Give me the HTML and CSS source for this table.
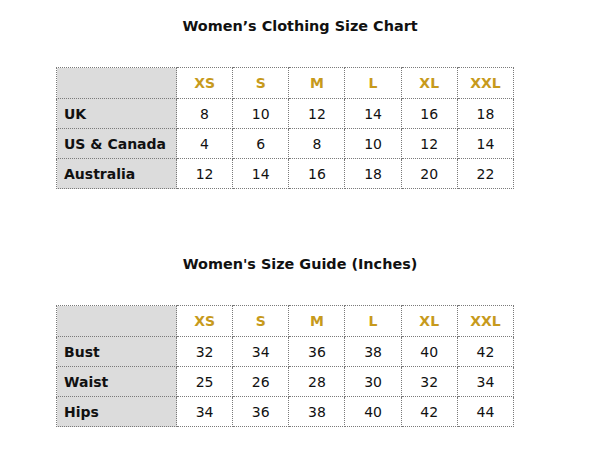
FILE: index.html
```html
<!DOCTYPE html>
<html>
<head>
<meta charset="utf-8">
<link rel="stylesheet" href="styles.css">
</head>
<body>
<div class="page">
  <h1 class="title">Women’s Clothing Size Chart</h1>
  <table class="chart">
    <colgroup><col class="c-label"><col><col><col><col><col><col></colgroup>
    <tr class="head"><td class="label"></td><td>XS</td><td>S</td><td>M</td><td>L</td><td>XL</td><td>XXL</td></tr>
    <tr><td class="label">UK</td><td>8</td><td>10</td><td>12</td><td>14</td><td>16</td><td>18</td></tr>
    <tr><td class="label">US &amp; Canada</td><td>4</td><td>6</td><td>8</td><td>10</td><td>12</td><td>14</td></tr>
    <tr><td class="label">Australia</td><td>12</td><td>14</td><td>16</td><td>18</td><td>20</td><td>22</td></tr>
  </table>

  <h1 class="title second">Women's Size Guide (Inches)</h1>
  <table class="chart">
    <colgroup><col class="c-label"><col><col><col><col><col><col></colgroup>
    <tr class="head"><td class="label"></td><td>XS</td><td>S</td><td>M</td><td>L</td><td>XL</td><td>XXL</td></tr>
    <tr><td class="label">Bust</td><td>32</td><td>34</td><td>36</td><td>38</td><td>40</td><td>42</td></tr>
    <tr><td class="label">Waist</td><td>25</td><td>26</td><td>28</td><td>30</td><td>32</td><td>34</td></tr>
    <tr><td class="label">Hips</td><td>34</td><td>36</td><td>38</td><td>40</td><td>42</td><td>44</td></tr>
  </table>
</div>
</body>
</html>
```
FILE: styles.css
```css
html, body {
  margin: 0;
  padding: 0;
  background: #fff;
}
body {
  font-family: "DejaVu Sans", Verdana, sans-serif;
  color: #111;
}
.page {
  width: 600px;
  padding-top: 17px;
}
.title {
  margin: 0;
  font-size: 14.4px;
  line-height: 18px;
  font-weight: bold;
  text-align: center;
  color: #111;
}
.title.second {
  margin-top: 66px;
}
.chart {
  margin: 32px 0 0 56px;
  border-collapse: collapse;
  table-layout: fixed;
  width: 458px;
  font-size: 14px;
}
.chart col.c-label { width: 120px; }
.chart td {
  border: 1px dotted #7a7a7a;
  height: 29px;
  padding: 0;
  text-align: center;
  vertical-align: middle;
  color: #111;
}
.chart tr.head td {
  height: 30px;
  font-weight: bold;
  color: #c79a1c;
}
.chart td.label {
  background: #dcdcdc;
  text-align: left;
  padding-left: 7px;
  font-weight: bold;
  color: #111;
}
```
